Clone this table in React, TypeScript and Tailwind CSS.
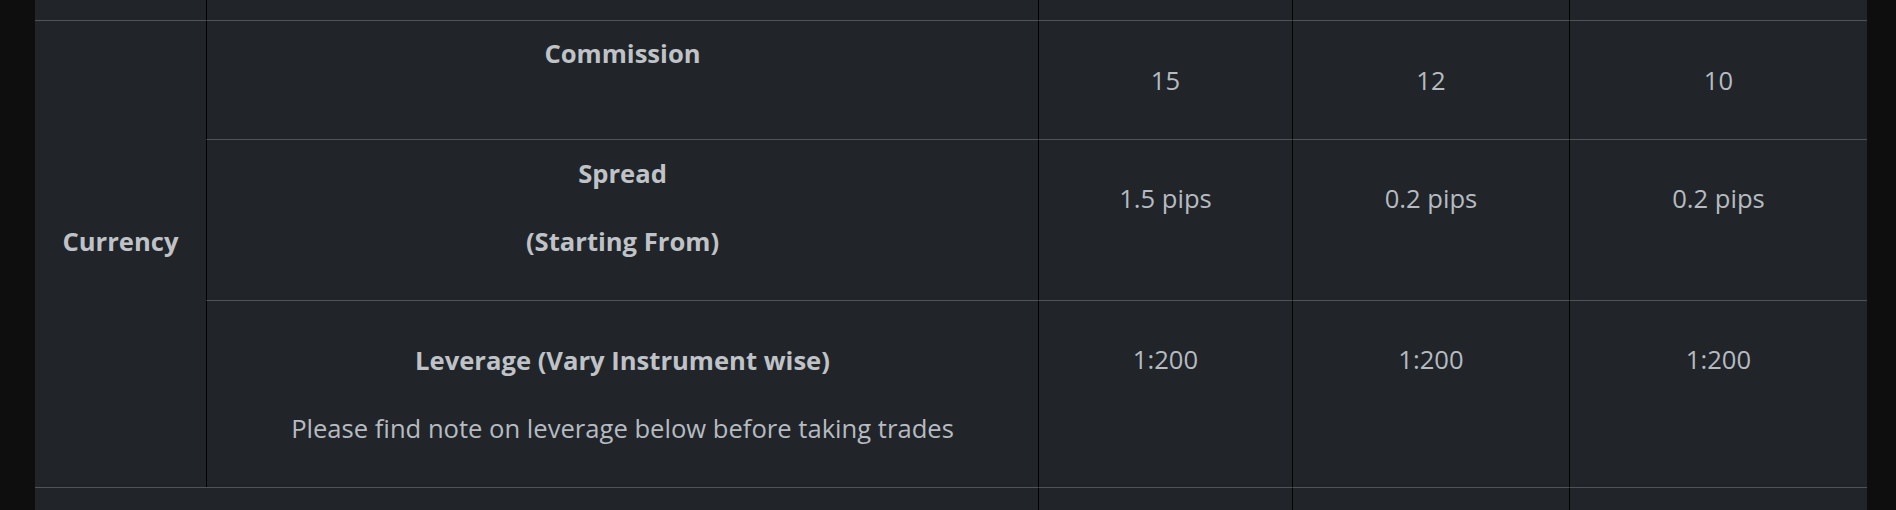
const values = [
  { label: "commission", cells: ["15", "12", "10"] },
  { label: "spread", cells: ["1.5 pips", "0.2 pips", "0.2 pips"] },
  { label: "leverage", cells: ["1:200", "1:200", "1:200"] },
];

function ValueCells({ row, pad }: { row: string[]; pad: string }) {
  return (
    <>
      {row.map((v, i) => (
        <div
          key={i}
          className={`border-t border-l border-t-[#4f5357] border-l-black text-center ${pad}`}
        >
          {v}
        </div>
      ))}
    </>
  );
}

export default function App() {
  return (
    <div className="min-h-[510px] bg-[#0e0e0e] pl-[35px] pr-[29px] font-['Open_Sans',sans-serif] text-[25.6px] leading-[36px] text-[#b6bbc1]">
      <div className="grid grid-cols-[171px_832px_254px_277px_298px] grid-rows-[20px_119px_161px_187px_23px] bg-[#212529]">
        {/* previous row tail */}
        <div />
        <div className="border-l border-black" />
        <div className="border-l border-black" />
        <div className="border-l border-black" />
        <div className="border-l border-black" />

        {/* Currency group */}
        <div className="row-span-3 flex items-center justify-center border-t border-[#4f5357] pb-[25px] font-bold text-[#bfc3c8]">
          Currency
        </div>

        <div className="border-t border-l border-t-[#4f5357] border-l-black pt-[15px] text-center font-bold text-[#bfc3c8]">
          Commission
        </div>
        <ValueCells row={values[0].cells} pad="pt-[42px]" />

        <div className="border-t border-l border-t-[#4f5357] border-l-black pt-[16px] text-center font-bold text-[#bfc3c8]">
          <p>Spread</p>
          <p className="mt-[32px]">(Starting From)</p>
        </div>
        <ValueCells row={values[1].cells} pad="pt-[41px]" />

        <div className="border-t border-l border-t-[#4f5357] border-l-black pt-[42px] text-center">
          <p className="font-bold text-[#bfc3c8]">Leverage (Vary Instrument wise)</p>
          <p className="mt-[32px]">Please find note on leverage below before taking trades</p>
        </div>
        <ValueCells row={values[2].cells} pad="pt-[41px]" />

        {/* next row head */}
        <div className="col-span-2 border-t border-[#4f5357]" />
        <div className="border-t border-l border-t-[#4f5357] border-l-black" />
        <div className="border-t border-l border-t-[#4f5357] border-l-black" />
        <div className="border-t border-l border-t-[#4f5357] border-l-black" />
      </div>
    </div>
  );
}
